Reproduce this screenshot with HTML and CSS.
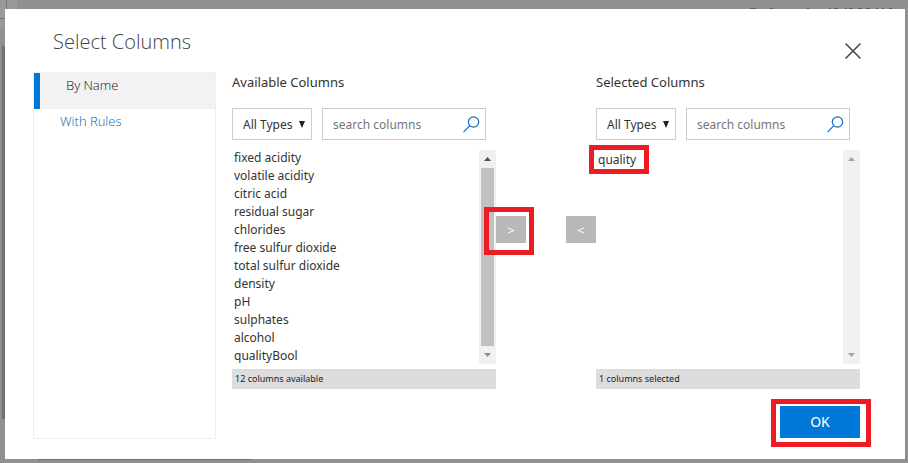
FILE: index.html
```html
<!DOCTYPE html>
<html lang="en">
<head>
<meta charset="utf-8">
<title>Select Columns</title>
<link rel="stylesheet" href="styles.css">
</head>
<body>
<svg class="backdrop" aria-hidden="true" shape-rendering="crispEdges">
  <path fill="#999" d="M0 0h17v29H0z"/>
  <path fill="#777" d="M6 0h1v18H6zM0 18h6v1H0z"/>
  <path fill="#707070" d="M2 46h4v373H2zM38 459h214v1H38z"/>
  <path fill="#5c5c5c" d="M750 8h6v1h-6zM770 8h3v1h-3zM807 8h2v1h-2zM829 8h2v1h-2zM834 8h4v1h-4zM845 8h2v1h-2zM849 8h4v1h-4zM858 8h4v1h-4zM866 8h4v1h-4zM876 8h2v1h-2zM882 8h2v1h-2zM889 8h3v1h-3z"/>
</svg>
<div class="dialog" role="dialog" aria-labelledby="dialog-title">
  <header class="dialog-header">
    <h1 id="dialog-title">Select Columns</h1>
    <button class="close" type="button" aria-label="Close">
      <svg width="16" height="16" viewBox="0 0 16 16"><path d="M.5.5l15 15M15.500.5l-15 15" fill="none" stroke="#444" stroke-width="1.500"/></svg>
    </button>
  </header>
  <div class="dialog-body">
    <nav class="modes">
      <a class="mode active" href="#name">By Name</a>
      <a class="mode" href="#rules">With Rules</a>
    </nav>
    <main class="content">
      <div class="picker">
        <section class="panel">
          <h2>Available Columns</h2>
          <div class="filters">
            <div class="type">
              <select aria-label="Available column type"><option>All Types</option></select>
              <svg width="6" height="7" viewBox="0 0 6 7"><path d="M0 0h6L3 7z" fill="#222"/></svg>
            </div>
            <div class="search">
              <input type="text" placeholder="search columns" aria-label="Search available columns">
              <svg width="17" height="17" viewBox="0 0 17 17" fill="none" stroke="#0f6fc5" stroke-width="1.200"><circle cx="10.500" cy="6" r="5.200"/><path d="M6.800 9.700L.5 16.200"/></svg>
            </div>
          </div>
          <div class="list">
            <ul>
              <li>fixed acidity</li>
              <li>volatile acidity</li>
              <li>citric acid</li>
              <li>residual sugar</li>
              <li>chlorides</li>
              <li>free sulfur dioxide</li>
              <li>total sulfur dioxide</li>
              <li>density</li>
              <li>pH</li>
              <li>sulphates</li>
              <li>alcohol</li>
              <li>qualityBool</li>
            </ul>
            <div class="scrollbar" aria-hidden="true">
              <svg width="7" height="4" viewBox="0 0 7 4"><path d="M0 4L3.500 0 7 4z" fill="#505050"/></svg>
              <div class="thumb"></div>
              <svg width="7" height="4" viewBox="0 0 7 4"><path d="M0 0h7L3.500 4z" fill="#8f8f8f"/></svg>
            </div>
          </div>
          <p class="status">12 columns available</p>
        </section>
        <div class="transfer">
          <span class="marked add"><button type="button" aria-label="Add">&gt;</button></span>
          <button type="button" aria-label="Remove">&lt;</button>
        </div>
        <section class="panel">
          <h2>Selected Columns</h2>
          <div class="filters">
            <div class="type">
              <select aria-label="Selected column type"><option>All Types</option></select>
              <svg width="6" height="7" viewBox="0 0 6 7"><path d="M0 0h6L3 7z" fill="#222"/></svg>
            </div>
            <div class="search">
              <input type="text" placeholder="search columns" aria-label="Search selected columns">
              <svg width="17" height="17" viewBox="0 0 17 17" fill="none" stroke="#0f6fc5" stroke-width="1.200"><circle cx="10.500" cy="6" r="5.200"/><path d="M6.800 9.700L.5 16.200"/></svg>
            </div>
          </div>
          <div class="list">
            <ul class="chosen">
              <li><span class="marked item">quality</span></li>
            </ul>
            <div class="scrollbar" aria-hidden="true">
              <svg width="7" height="4" viewBox="0 0 7 4"><path d="M0 4L3.500 0 7 4z" fill="#a3a3a3"/></svg>
              <svg width="7" height="4" viewBox="0 0 7 4"><path d="M0 0h7L3.500 4z" fill="#a3a3a3"/></svg>
            </div>
          </div>
          <p class="status">1 columns selected</p>
        </section>
      </div>
      <footer>
        <span class="marked confirm"><button class="ok" type="button">OK</button></span>
      </footer>
    </main>
  </div>
</div>
</body>
</html>
```
FILE: styles.css
```css
* { box-sizing: border-box; }

body {
  margin: 0;
  padding: 9px 3px 4px 5px;
  min-height: 100vh;
  display: flex;
  background: #909090;
  font: 13px/18px "Noto Sans", "Open Sans", sans-serif;
  color: #333;
}

h1, h2, p, ul { margin: 0; padding: 0; }
ul { list-style: none; }
button, select, input { font: inherit; color: inherit; border: 0; border-radius: 0; padding: 0; margin: 0; }

.backdrop { position: absolute; inset: 0; width: 100%; height: 100%; }

.dialog {
  position: relative;
  flex: 1;
  display: flex;
  flex-direction: column;
  padding: 18px 45px 20px 28px;
  background: #fff;
}

.dialog-header {
  display: flex;
  justify-content: space-between;
  padding-left: 20px;
  height: 45px;
}
h1 { font: 300 20px/30px "Open Sans", sans-serif; color: #444; }
.close { display: flex; align-self: flex-start; margin-top: 16px; margin-right: -1px; background: none; }

.dialog-body { flex: 1; display: flex; gap: 16px; }

.modes { width: 183px; border: 1px solid #eee; }
.mode {
  display: block;
  height: 36px;
  padding: 3px 26px;
  font-family: "Open Sans", sans-serif;
  font-weight: 300;
  color: #0065b3;
  text-decoration: none;
}
.mode.active { border-left: 6px solid #0078d7; background: #f2f2f2; color: #111; }

.content { flex: 1; display: flex; flex-direction: column; justify-content: space-between; }
.picker { display: flex; }
.panel { flex: 1; }
h2 { font-size: 13px; line-height: 20px; font-weight: 400; margin-bottom: 16px; }

.filters { display: flex; gap: 10px; margin-right: 10px; font-size: 12px; }
.type, .search { display: flex; align-items: center; height: 32px; border: 1px solid #ccc; }
.type { width: 80px; padding: 0 6px 0 10px; }
.type select { flex: 1; min-width: 0; padding-top: 1px; appearance: none; background: none; }
.search { flex: 1; padding: 0 5px 0 10px; }
.search input { flex: 1; min-width: 0; width: 0; padding-top: 1px; background: none; }
.search input::placeholder { color: #767676; opacity: 1; }

.list { display: flex; justify-content: space-between; height: 214px; margin: 10px 0 5px; font-size: 12px; }
.list ul { margin-top: -1px; padding-left: 2px; }
.list .chosen { padding-top: 2px; }
.scrollbar {
  width: 17px;
  padding: 7px 2px;
  display: flex;
  flex-direction: column;
  justify-content: space-between;
  align-items: center;
  background: #f1f1f1;
}
.thumb { width: 13px; height: 178px; background: #c1c1c1; }

.status { height: 20px; padding-left: 3px; background: #ddd; color: #222; font-size: 9px; line-height: 20px; }

.transfer { width: 100px; display: flex; justify-content: space-between; align-items: flex-start; padding-top: 144px; }
.transfer button { display: block; width: 30px; height: 27px; background: #b8b8b8; color: #fff; }

footer { display: flex; justify-content: flex-end; padding-bottom: 1px; }
.ok { display: block; width: 80px; height: 32px; background: #0078d7; color: #fff; font-size: 14px; }

.marked { position: relative; }
.marked::after { content: ""; position: absolute; border: 5px solid #ed1c24; pointer-events: none; }
.add::after { inset: -9px -8px -12px -12px; }
.item::after { inset: -6px -13px -6px -9px; }
.confirm::after { inset: -7px -11px -9px -9px; }
```
